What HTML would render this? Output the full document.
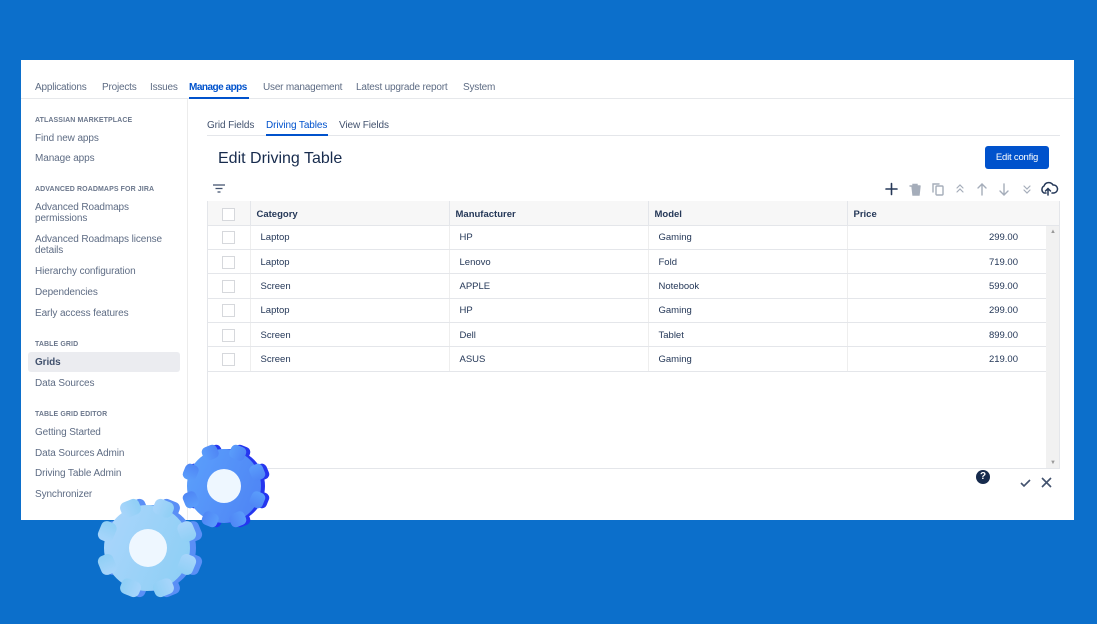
<!DOCTYPE html>
<html><head><style>
*{margin:0;padding:0;box-sizing:border-box}
body{width:1097px;height:624px;background:#0c6fcb;font-family:"Liberation Sans",sans-serif;position:relative;overflow:hidden;color:#42526e}
.a{position:absolute;white-space:nowrap}
#panel{position:absolute;left:21px;top:60px;width:1053px;height:460px;background:#fff}
.nav{font-size:10px;top:22px;color:#5e6c84;letter-spacing:-.2px}
.sh{font-size:7px;font-weight:bold;color:#6b778c;letter-spacing:.1px}
.si{font-size:10px;color:#5e6c84;letter-spacing:-.1px}
table{border-collapse:collapse;font-size:9.5px;color:#253858}
td,th{height:24.3px;border-bottom:1px solid #e4e6ea;text-align:left;padding:0;vertical-align:middle}
th{background:#f7f7f7;font-weight:bold;border-right:1px solid #e4e6ea;padding-top:3px}
td{border-right:1px solid #eee;padding-top:1px}
.cb{display:inline-block;width:13px;height:13px;border:1px solid #d6d8dc;background:#fff;margin-left:14px;vertical-align:middle}
</style></head><body>
<div id="panel">
 <div class="a" style="left:0;top:38px;width:1053px;height:1px;background:#e6e8eb"></div>
 <div class="a nav" style="left:14px">Applications</div>
 <div class="a nav" style="left:81px">Projects</div>
 <div class="a nav" style="left:129px">Issues</div>
 <div class="a nav" style="left:168px;color:#0052cc;font-weight:bold;letter-spacing:-.5px">Manage apps</div>
 <div class="a" style="left:168px;top:37px;width:60px;height:2px;background:#0052cc"></div>
 <div class="a nav" style="left:242px">User management</div>
 <div class="a nav" style="left:335px">Latest upgrade report</div>
 <div class="a nav" style="left:442px">System</div>
 <div class="a" style="left:166px;top:39px;width:1px;height:421px;background:#ececec"></div>
 <div class="a sh" style="left:14px;top:57px">ATLASSIAN MARKETPLACE</div>
 <div class="a si" style="left:14px;top:73px">Find new apps</div>
 <div class="a si" style="left:14px;top:93px">Manage apps</div>
 <div class="a sh" style="left:14px;top:126px">ADVANCED ROADMAPS FOR JIRA</div>
 <div class="a si" style="left:14px;top:142px;line-height:11px">Advanced Roadmaps<br>permissions</div>
 <div class="a si" style="left:14px;top:174px;line-height:11px">Advanced Roadmaps license<br>details</div>
 <div class="a si" style="left:14px;top:206px">Hierarchy configuration</div>
 <div class="a si" style="left:14px;top:227px">Dependencies</div>
 <div class="a si" style="left:14px;top:248px">Early access features</div>
 <div class="a sh" style="left:14px;top:281px">TABLE GRID</div>
 <div class="a" style="left:7px;top:292px;width:152px;height:20px;background:#ebecf0;border-radius:3px"></div>
 <div class="a si" style="left:14px;top:297px;font-weight:bold;color:#42526e">Grids</div>
 <div class="a si" style="left:14px;top:318px">Data Sources</div>
 <div class="a sh" style="left:14px;top:351px">TABLE GRID EDITOR</div>
 <div class="a si" style="left:14px;top:367px">Getting Started</div>
 <div class="a si" style="left:14px;top:388px">Data Sources Admin</div>
 <div class="a si" style="left:14px;top:408px">Driving Table Admin</div>
 <div class="a si" style="left:14px;top:429px">Synchronizer</div>

 <div class="a" style="left:186px;top:75px;width:853px;height:1px;background:#e4e6ea"></div>
 <div class="a si" style="left:186px;top:60px;color:#42526e">Grid Fields</div>
 <div class="a si" style="left:245px;top:60px;color:#0052cc">Driving Tables</div>
 <div class="a" style="left:245px;top:74px;width:62px;height:2px;background:#0052cc"></div>
 <div class="a si" style="left:318px;top:60px;color:#42526e">View Fields</div>
 <div class="a" style="left:197px;top:90px;font-size:16px;color:#172b4d">Edit Driving Table</div>
 <div class="a" style="left:964px;top:86px;width:64px;height:23px;background:#0052cc;border-radius:3px;color:#fff;font-size:9.5px;text-align:center;line-height:23px;letter-spacing:-.2px">Edit config</div>
 <svg class="a" style="left:190px;top:123px" width="16" height="12"><path d="M2 2h12M4.5 5.5h7M6.5 9h3" stroke="#42526e" stroke-width="1.3"/></svg>
 <svg class="a" style="left:862px;top:121px" width="180" height="16" fill="none" stroke-linecap="round">
  <path d="M3 8h11M8.5 2.5v11" stroke="#253858" stroke-width="1.6"/>
  <path d="M27 5h10M29 5l1 9h6l1-9M30 5V3.5h4V5" stroke="#a5adba" stroke-width="1.4" fill="#a5adba"/>
  <rect x="53" y="5" width="7" height="9" rx="1" stroke="#a5adba" stroke-width="1.4"/><path d="M50 11V3h6" stroke="#a5adba" stroke-width="1.4"/>
  <path d="M74 7l3-3 3 3M74 11l3-3 3 3" stroke="#a5adba" stroke-width="1.2"/>
  <path d="M99 3v11M95 7l4-4 4 4" stroke="#a5adba" stroke-width="1.4"/>
  <path d="M121 3v11M117 10l4 4 4-4" stroke="#a5adba" stroke-width="1.4"/>
  <path d="M141 5l3 3 3-3M141 9l3 3 3-3" stroke="#a5adba" stroke-width="1.2"/>
  <path d="M163 12h-2a4 4 0 0 1 0-7 5 5 0 0 1 9-1 3.5 3.5 0 0 1 1 8h-2M165 14V8M162.5 10l2.5-2.5 2.5 2.5" stroke="#253858" stroke-width="1.5"/>
 </svg>
 <div class="a" style="left:186px;top:141px;width:853px;height:268px;border:1px solid #e4e6ea;border-top:none">
  <table style="width:839px;position:absolute;left:0;top:0">
   <tr><th style="width:42px"><span class="cb"></span></th><th style="width:199px;padding-left:6px">Category</th><th style="width:199px;padding-left:6px">Manufacturer</th><th style="width:199px;padding-left:6px">Model</th><th style="padding-left:6px">Price</th></tr>
   <tr><td><span class="cb"></span></td><td style="padding-left:10px">Laptop</td><td style="padding-left:10px">HP</td><td style="padding-left:10px">Gaming</td><td style="text-align:right;padding-right:28px">299.00</td></tr>
   <tr><td><span class="cb"></span></td><td style="padding-left:10px">Laptop</td><td style="padding-left:10px">Lenovo</td><td style="padding-left:10px">Fold</td><td style="text-align:right;padding-right:28px">719.00</td></tr>
   <tr><td><span class="cb"></span></td><td style="padding-left:10px">Screen</td><td style="padding-left:10px">APPLE</td><td style="padding-left:10px">Notebook</td><td style="text-align:right;padding-right:28px">599.00</td></tr>
   <tr><td><span class="cb"></span></td><td style="padding-left:10px">Laptop</td><td style="padding-left:10px">HP</td><td style="padding-left:10px">Gaming</td><td style="text-align:right;padding-right:28px">299.00</td></tr>
   <tr><td><span class="cb"></span></td><td style="padding-left:10px">Screen</td><td style="padding-left:10px">Dell</td><td style="padding-left:10px">Tablet</td><td style="text-align:right;padding-right:28px">899.00</td></tr>
   <tr><td><span class="cb"></span></td><td style="padding-left:10px">Screen</td><td style="padding-left:10px">ASUS</td><td style="padding-left:10px">Gaming</td><td style="text-align:right;padding-right:28px">219.00</td></tr>
  </table>
  <div class="a" style="right:0;top:0;width:13px;height:25px;background:#f7f7f7;border-bottom:1px solid #e4e6ea"></div>
  <div class="a" style="right:0;top:25px;width:13px;height:242px;background:#f1f1f1"></div>
  <div class="a" style="right:3px;top:28px;font-size:6px;color:#999">▲</div>
  <div class="a" style="right:3px;bottom:2px;font-size:6px;color:#999">▼</div>
 </div>
 <div class="a" style="left:955px;top:410px;width:14px;height:14px;border-radius:50%;background:#172b4d;color:#fff;font-size:10px;font-weight:bold;text-align:center;line-height:14px">?</div>
 <svg class="a" style="left:998px;top:416px" width="40" height="14" fill="none" stroke="#42526e" stroke-width="1.6"><path d="M2 7l3 3 6-6"/><path d="M23 2l9 9M32 2l-9 9"/></svg>
</div>
<svg class="a" style="left:0;top:0" width="1097" height="624">
 <defs>
  <linearGradient id="g1" x1="0" x2="1"><stop offset="0" stop-color="#5a9dfb"/><stop offset="1" stop-color="#4f86f5"/></linearGradient>
  <linearGradient id="g2" x1="0" x2="1"><stop offset="0" stop-color="#a8d5fb"/><stop offset="1" stop-color="#8fcff5"/></linearGradient>
  <g id="gA"><circle r="37"/><rect x="-8" y="-43" width="16" height="14" rx="5"/><rect x="-8" y="-43" width="16" height="14" rx="5" transform="rotate(45)"/><rect x="-8" y="-43" width="16" height="14" rx="5" transform="rotate(90)"/><rect x="-8" y="-43" width="16" height="14" rx="5" transform="rotate(135)"/><rect x="-8" y="-43" width="16" height="14" rx="5" transform="rotate(180)"/><rect x="-8" y="-43" width="16" height="14" rx="5" transform="rotate(225)"/><rect x="-8" y="-43" width="16" height="14" rx="5" transform="rotate(270)"/><rect x="-8" y="-43" width="16" height="14" rx="5" transform="rotate(315)"/></g>
  <g id="gB"><circle r="43"/><rect x="-10" y="-51" width="20" height="16" rx="6"/><rect x="-10" y="-51" width="20" height="16" rx="6" transform="rotate(45)"/><rect x="-10" y="-51" width="20" height="16" rx="6" transform="rotate(90)"/><rect x="-10" y="-51" width="20" height="16" rx="6" transform="rotate(135)"/><rect x="-10" y="-51" width="20" height="16" rx="6" transform="rotate(180)"/><rect x="-10" y="-51" width="20" height="16" rx="6" transform="rotate(225)"/><rect x="-10" y="-51" width="20" height="16" rx="6" transform="rotate(270)"/><rect x="-10" y="-51" width="20" height="16" rx="6" transform="rotate(315)"/></g>
 </defs>
 <use href="#gA" transform="translate(228,486) rotate(22.5)" fill="#2536ef"/>
 <use href="#gA" transform="translate(224,486) rotate(22.5)" fill="url(#g1)"/>
 <circle cx="224" cy="486" r="17" fill="#eef7ff"/>
 <use href="#gB" transform="translate(153,548) rotate(22.5)" fill="#5a8ff6"/>
 <use href="#gB" transform="translate(147,548) rotate(22.5)" fill="url(#g2)"/>
 <circle cx="148" cy="548" r="19" fill="#eef7ff"/>
</svg>
</body></html>
